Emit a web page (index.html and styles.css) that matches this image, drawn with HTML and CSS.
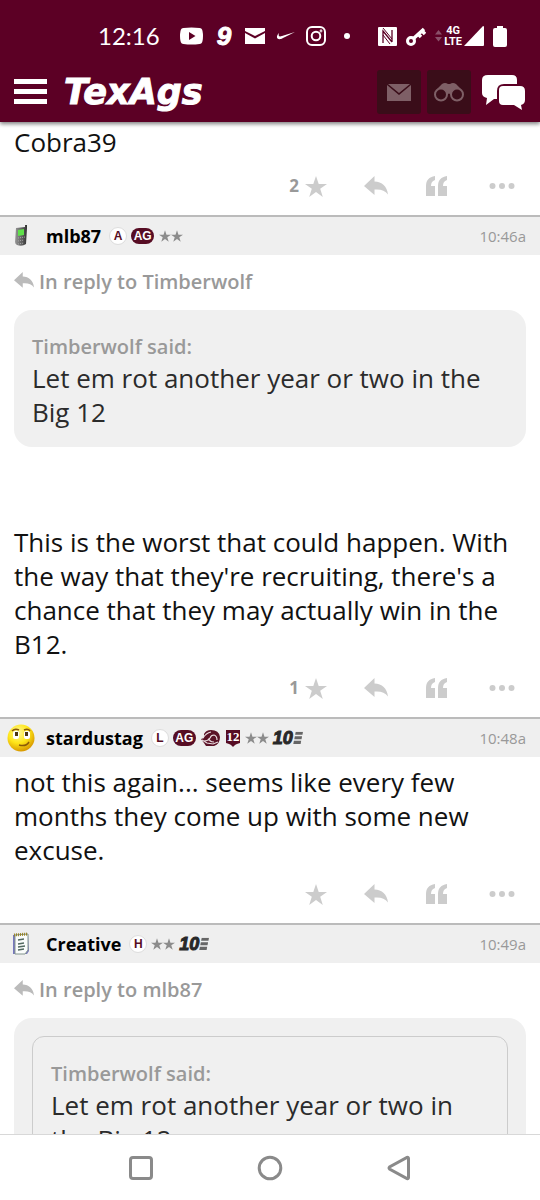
FILE: index.html
```html
<!DOCTYPE html>
<html lang="en">
<head>
<meta charset="utf-8">
<meta name="viewport" content="width=device-width, initial-scale=1">
<title>TexAgs</title>
<link rel="stylesheet" href="styles.css">
</head>
<body>
<svg class="sprite" aria-hidden="true">
  <symbol id="star" viewBox="1 1 22 21"><path d="M12 1l2.700 8H23l-6.800 4.800 2.600 8.200-6.800-5-6.800 5 2.600-8.200L1 9h8.300z"/></symbol>
  <symbol id="reply" viewBox="0 0 24 20"><path d="M0 10L10.500 0v5.500C18 6 23 10 24 18.500c-3-4-7-5.500-13.500-5V19z"/></symbol>
  <symbol id="quote" viewBox="0 0 24 22"><path d="M11 1v4C8 6 7 8 7 11h4v10H2V11C2 5 5 2 11 1zM23 1v4c-3 1-4 3-4 6h4v10h-9V11c0-6 3-9 9-10z"/></symbol>
  <symbol id="dots" viewBox="0 0 36 10"><circle cx="8.500" cy="5" r="3"/><circle cx="18" cy="5" r="3"/><circle cx="27.500" cy="5" r="3"/></symbol>
  <symbol id="stripes" viewBox="0 0 11 14"><path d="M3 0h8l-.6 3.500H2.300zM2 5h8l-.6 3.500h-8zM1 10h8l-.6 3.500H.3z"/></symbol>
</svg>

<header class="top">
  <div class="status">
    <span class="clock">12:16</span>
    <div class="notices">
      <svg width="23" height="18" viewBox="0 0 23 18"><path fill="#fff" fill-rule="evenodd" d="M3.500 1Q11.500 0 19.500 1 22 1 22.500 4q1 5 0 10-.5 3-3 3-8 1-16 0-2.500 0-3-3-1-5 0-10 .5-3 3-3zM9 5v8l6.500-4z"/></svg>
      <span class="nine">9</span>
      <svg width="20" height="16" viewBox="0 0 20 16"><path fill="#fff" d="M0 0h20v3l-10 5L0 3zM0 5l10 5.500L20 5v11H0z"/></svg>
      <svg width="19" height="10" viewBox="0 0 19 10"><path fill="#fff" d="M3 2C0 5 0 9 5 8L19 1 6 5C3 6 2 5 3 2z"/></svg>
      <svg width="20" height="20" viewBox="0 0 20 20" fill="none" stroke="#fff" stroke-width="2"><rect x="1" y="1" width="18" height="18" rx="5"/><circle cx="10" cy="10" r="4.300"/><circle cx="15" cy="5" r=".4"/></svg>
      <svg width="19" height="8" viewBox="0 0 19 8"><circle cx="10" cy="4" r="3" fill="#fff"/></svg>
    </div>
    <div class="signals">
      <svg width="19" height="19" viewBox="0 0 19 19"><rect width="19" height="19" rx="1" fill="#fff"/><path d="M5 16V4l9 11M14 3v12M5 4l9 11" fill="none" stroke="#5c0025" stroke-width="1.300"/><path d="M5 1l9 11" fill="none" stroke="#5c0025"/><path d="M5 8l7 9" fill="none" stroke="#5c0025"/></svg>
      <svg width="20" height="19" viewBox="0 0 20 19"><circle cx="5" cy="14" r="3.500" fill="none" stroke="#fff" stroke-width="3"/><path d="M7.500 11.500L18 2M12 7l3 3M16 4l3 3" fill="none" stroke="#fff" stroke-width="3.500"/></svg>
      <div class="network">
        <svg width="7" height="12" viewBox="0 0 7 12"><path fill="#8a506a" d="M3.500 0L7 4.500H0zM0 7h7l-3.500 4.500z"/></svg>
        <span class="lte">4G<br>LTE</span>
        <svg width="20" height="20" viewBox="0 0 20 20"><path fill="#fff" d="M19 0q1 0 1 1v18q0 1-1 1H0z"/></svg>
      </div>
      <svg width="14" height="21" viewBox="0 0 14 21"><path fill="#fff" d="M4 0h6v2h2q2 0 2 2v15q0 2-2 2H2q-2 0-2-2V4q0-2 2-2h2z"/></svg>
    </div>
  </div>
  <div class="appbar">
    <button class="plain" aria-label="Menu"><svg width="33" height="26" viewBox="0 0 33 26"><path fill="#fff" d="M0 0h33v5H0zM0 10h33v5H0zM0 20h33v5H0z"/></svg></button>
    <a class="logo" href="#">TexAgs</a>
    <div class="tools">
      <button class="tile" aria-label="Messages"><svg width="24" height="17" viewBox="0 0 24 17"><path d="M0 1l12 10L24 1v16H0zM1 0h22L12 9z"/></svg></button>
      <button class="tile" aria-label="Watched topics"><svg width="30" height="19" viewBox="0 0 30 19"><g fill="none" stroke="#7e5f66" stroke-width="2"><circle cx="7" cy="11.500" r="6"/><circle cx="23" cy="11.500" r="6"/></g><path d="M3 6l5-5q3-2 6 0h2q3-2 6 0l5 5q-6-2-9 2l-1 4q-2-3-4 0l-1-4Q9 4 3 6z"/></svg></button>
      <button class="plain" aria-label="Forums"><svg width="43" height="35" viewBox="0 0 43 35"><path fill="#fff" d="M6 0h24q5 0 5 5v4H22q-7 0-7 7v8h-3l-8 6 1-7q-5-1-5-5V5q0-5 6-5z"/><path fill="#fff" d="M21 11h17q5 0 5 5v9q0 4-4 5l1 5-8-5H21q-4 0-4-4V15q0-4 4-4z"/></svg></button>
    </div>
  </div>
</header>

<main class="feed">
  <article class="post">
    <p class="text first">Cobra39</p>
    <div class="actions">
      <button class="act"><span class="count">2</span><svg width="24" height="21"><use href="#star"/></svg></button>
      <button class="act" aria-label="Reply"><svg width="24" height="20"><use href="#reply"/></svg></button>
      <button class="act" aria-label="Quote"><svg width="24" height="22"><use href="#quote"/></svg></button>
      <button class="act" aria-label="More"><svg width="36" height="10"><use href="#dots"/></svg></button>
    </div>
  </article>

  <article class="post">
    <div class="byline">
      <span class="avatar"><svg width="16" height="24" viewBox="0 0 16 24"><defs><linearGradient id="phone"><stop offset="0" stop-color="#999"/><stop offset=".5" stop-color="#666"/><stop offset="1" stop-color="#333"/></linearGradient></defs><path fill="url(#phone)" d="M12 1h2v3l-1 16q-4 3-9 1-2-1-2-3l1-14 9-1z"/><path fill="#5fe04a" d="M5 6l6-1v6l-6 1z"/><path d="M5 14l7-1M5 17l6-1M5 20l6-1" stroke="#aaa" stroke-dasharray="1 1"/></svg></span>
      <a class="name" href="#">mlb87</a>
      <span class="badge round">A</span><span class="badge ag">AG</span>
      <span class="stars"><svg width="12" height="12"><use href="#star"/></svg><svg width="12" height="12"><use href="#star"/></svg></span>
      <time class="time">10:46a</time>
    </div>
    <a class="replyto" href="#"><svg width="20" height="20" viewBox="0 0 24 24"><use href="#reply" width="24" height="20"/></svg>In reply to Timberwolf</a>
    <blockquote class="quote">
      <p class="said">Timberwolf said:</p>
      <p class="text">Let em rot another year or two in the Big 12</p>
    </blockquote>
    <p class="text spaced">This is the worst that could happen. With the way that they're recruiting, there's a chance that they may actually win in the B12.</p>
    <div class="actions">
      <button class="act"><span class="count">1</span><svg width="24" height="21"><use href="#star"/></svg></button>
      <button class="act" aria-label="Reply"><svg width="24" height="20"><use href="#reply"/></svg></button>
      <button class="act" aria-label="Quote"><svg width="24" height="22"><use href="#quote"/></svg></button>
      <button class="act" aria-label="More"><svg width="36" height="10"><use href="#dots"/></svg></button>
    </div>
  </article>

  <article class="post">
    <div class="byline">
      <span class="avatar"><svg width="28" height="28" viewBox="0 0 28 28"><defs><radialGradient id="face" cx=".4" cy=".3" r=".7"><stop offset="0" stop-color="#fff89a"/><stop offset=".55" stop-color="#ffe619"/><stop offset="1" stop-color="#d99a00"/></radialGradient></defs><circle cx="14" cy="14" r="13.500" fill="url(#face)"/><rect x="6" y="7" width="6" height="8" rx="2" fill="#fff"/><rect x="17" y="7" width="6" height="8" rx="2" fill="#fff"/><path d="M8 8h3v4H8zM18 8h3v4h-3z" fill="#4b3510"/><path d="M5 7q3-3 7-1M17 6q4-2 6 1M12 21q7 2 10-3" fill="none" stroke="#8b5a08" stroke-width="1.500"/></svg></span>
      <a class="name" href="#">stardustag</a>
      <span class="badge round">L</span><span class="badge ag">AG</span>
      <svg width="20" height="18" viewBox="0 0 20 18"><path fill="#5a1226" d="M3 5Q5 1 10 1q8 0 9 7 0 7-6 9H5l-2-3-3-4 3-1z"/><path fill="none" stroke="#eadde0" stroke-width="1.200" d="M2 9q3-5 8-6M3 12q4 0 6-3 1-3 4-3 3 1 3 5M1 11l5 3 6 1 5-2M8 9q0 4 5 4"/></svg>
      <span class="shield"><svg width="16" height="19" viewBox="0 0 16 19"><path fill="#570d24" d="M1 1h14v13q-5 1-7 4-2-3-7-4z"/><text x="8" y="12" text-anchor="middle">12</text></svg></span>
      <span class="stars"><svg width="12" height="12"><use href="#star"/></svg><svg width="12" height="12"><use href="#star"/></svg></span>
      <span class="ten">10<svg width="10" height="14" viewBox="0 0 11 14"><use href="#stripes"/></svg></span>
      <time class="time">10:48a</time>
    </div>
    <p class="text">not this again... seems like every few months they come up with some new excuse.</p>
    <div class="actions">
      <button class="act" aria-label="Star"><svg width="24" height="21"><use href="#star"/></svg></button>
      <button class="act" aria-label="Reply"><svg width="24" height="20"><use href="#reply"/></svg></button>
      <button class="act" aria-label="Quote"><svg width="24" height="22"><use href="#quote"/></svg></button>
      <button class="act" aria-label="More"><svg width="36" height="10"><use href="#dots"/></svg></button>
    </div>
  </article>

  <article class="post">
    <div class="byline">
      <span class="avatar"><svg width="18" height="24" viewBox="0 0 18 24"><path fill="#7777bd" d="M1 3L16 2l1 17-2 3H1z"/><path fill="#fafcfb" stroke="#83958d" d="M3 3l13-1v16l-3 4H3z"/><path d="M2 3l14-1" stroke="#9a8526" stroke-width="3" stroke-dasharray="1 1"/><path d="M6 8l6-1M6 12l6-1M6 15l7-1M6 18l6-1" stroke="#526960" stroke-width="1.300"/></svg></span>
      <a class="name" href="#">Creative</a>
      <span class="badge round">H</span>
      <span class="stars"><svg width="12" height="12"><use href="#star"/></svg><svg width="12" height="12"><use href="#star"/></svg></span>
      <span class="ten">10<svg width="10" height="14" viewBox="0 0 11 14"><use href="#stripes"/></svg></span>
      <time class="time">10:49a</time>
    </div>
    <a class="replyto" href="#"><svg width="20" height="20" viewBox="0 0 24 24"><use href="#reply" width="24" height="20"/></svg>In reply to mlb87</a>
    <blockquote class="quote">
      <blockquote class="nested">
        <p class="said">Timberwolf said:</p>
        <p class="text">Let em rot another year or two in the Big 12</p>
      </blockquote>
    </blockquote>
  </article>
</main>

<nav class="system">
  <button class="plain" aria-label="Recent apps"><svg width="26" height="26" viewBox="0 0 26 26"><rect x="2.500" y="2.500" width="21" height="21" rx="2.500"/></svg></button>
  <button class="plain" aria-label="Home"><svg width="26" height="26" viewBox="0 0 26 26"><circle cx="13" cy="13" r="10.800"/></svg></button>
  <button class="plain" aria-label="Back"><svg width="26" height="26" viewBox="0 0 26 26"><path d="M3.500 12q-1 1 0 2L21 23.500q1.500.5 1.500-1v-19q0-1.500-1.500-1z"/></svg></button>
</nav>
</body>
</html>
```

FILE: styles.css
```css
* { box-sizing: border-box; }
body {
  margin: 0;
  height: 100vh;
  display: flex;
  flex-direction: column;
  overflow: hidden;
  background: #fff;
  color: #111;
  font-family: "Open Sans", "Noto Sans", sans-serif;
}
svg { display: block; flex: none; }
p, blockquote { margin: 0; }
a { color: inherit; text-decoration: none; }
button { font: inherit; border: 0; padding: 0; background: none; color: inherit; }
.sprite { width: 0; height: 0; position: absolute; }
.plain { display: flex; }

.top {
  flex: none;
  z-index: 1;
  background: #5c0025;
  color: #fff;
  box-shadow: 0 2px 4px rgba(0, 0, 0, .5);
}
.status {
  display: flex;
  align-items: center;
  height: 62px;
  padding: 10px 33px 0 98px;
}
.clock { width: 82px; font: 24px/24px Lato, sans-serif; }
.notices { display: flex; align-items: center; gap: 11px; }
.nine { width: 20px; font: italic bold 26px/24px "Liberation Sans", Arial, sans-serif; text-align: center; -webkit-text-stroke: 1px #fff; }
.signals { display: flex; align-items: center; gap: 9px; margin-left: auto; }
.network { display: flex; align-items: center; gap: 2px; }
.lte { font: bold 11px/11px Roboto, sans-serif; text-align: center; }
.appbar { display: flex; align-items: center; height: 60px; padding: 0 15px 0 14px; }
.logo {
  margin-left: 17px;
  font: italic bold 35px/40px "DejaVu Sans", sans-serif;
  -webkit-text-stroke: 1px #fff;
}
.tools { display: flex; align-items: center; gap: 6px; margin-left: auto; }
.tile {
  display: flex;
  align-items: center;
  justify-content: center;
  width: 44px;
  height: 44px;
  border-radius: 3px;
  background: #3a0d19;
  fill: #7e5f66;
}
.tile + .plain { margin-left: 5px; }

.feed { flex: 1; min-height: 0; overflow: hidden; }
.text { padding: 8px 14px 0; font-size: 26px; line-height: 34px; }
.first { padding-top: 3px; }
.spaced { padding-top: 78px; }
.actions {
  display: flex;
  align-items: center;
  justify-content: flex-end;
  gap: 36px;
  height: 56px;
  padding: 0 20px 2px;
}
.act { display: flex; align-items: center; gap: 5px; fill: #ccc; }
.count { color: #999; font-size: 17px; font-weight: 700; line-height: 24px; }

.byline {
  display: flex;
  align-items: center;
  gap: 4px;
  height: 40px;
  padding-right: 14px;
  border-top: 2px solid #bbb;
  background: #efefef;
}
.avatar { display: flex; justify-content: center; width: 42px; }
.name { margin-right: 4px; color: #000; font-size: 18px; font-weight: 700; line-height: 24px; }
.badge { font: bold 12px/16px "Liberation Sans", Arial, sans-serif; text-align: center; }
.round { width: 18px; border: 1px solid #ddd; border-radius: 9px; background: #fff; color: #570d24; }
.ag { width: 23px; margin-right: 1px; border-radius: 8px; background: #570d24; color: #fff; }
.shield text { fill: #fff; font: bold 13px "Liberation Serif", serif; }
.stars { display: flex; fill: #8c8c8c; }
.ten {
  display: flex;
  align-items: center;
  color: #282828;
  fill: #666;
  font: italic bold 18px/20px "Liberation Sans", Arial, sans-serif;
  -webkit-text-stroke: 1px #282828;
}
.ten svg { stroke: none; }
.time { margin-left: auto; color: #999; font-size: 15px; line-height: 20px; }

.replyto {
  display: flex;
  align-items: center;
  gap: 5px;
  padding: 13px 14px 14px;
  color: #999;
  fill: #bbb;
  font-size: 20px;
  font-weight: 600;
  line-height: 28px;
}
.quote { margin: 0 14px; padding: 18px; border-radius: 18px; background: #f0f0f0; }
.quote .text { padding: 0; color: #2b2b2b; }
.said { padding-top: 4px; color: #999; font-size: 20px; font-weight: 600; line-height: 29px; }
.nested { padding: 18px; border: 1px solid #ccc; border-radius: 12px; }

.system {
  flex: none;
  display: flex;
  align-items: center;
  justify-content: center;
  gap: 103px;
  height: 66px;
  border-top: 1px solid #d8d8d8;
  background: #fff;
  fill: none;
  stroke: #8a8a8a;
  stroke-width: 3px;
}
```
